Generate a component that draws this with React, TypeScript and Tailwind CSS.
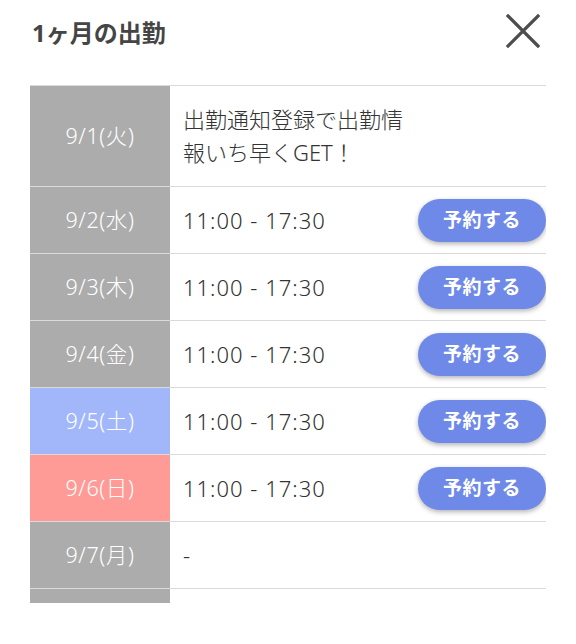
import React from "react";

type Row = { date: string; kind: "gray" | "blue" | "red"; time?: string; note?: string };

const rows: Row[] = [
  { date: "9/1(火)", kind: "gray", note: "出勤通知登録で出勤情報いち早くGET！" },
  { date: "9/2(水)", kind: "gray", time: "11:00 - 17:30" },
  { date: "9/3(木)", kind: "gray", time: "11:00 - 17:30" },
  { date: "9/4(金)", kind: "gray", time: "11:00 - 17:30" },
  { date: "9/5(土)", kind: "blue", time: "11:00 - 17:30" },
  { date: "9/6(日)", kind: "red", time: "11:00 - 17:30" },
  { date: "9/7(月)", kind: "gray" },
  { date: "", kind: "gray" },
];

function DateCell({ row }: { row: Row }) {
  const bg =
    row.kind === "blue" ? "bg-[#a2b7f9]" : row.kind === "red" ? "bg-[#fe9b96]" : "bg-[#acacac]";
  return (
    <div className={`w-[140px] shrink-0 ${bg} flex items-center justify-center text-white text-[21.5px] font-light tracking-[0.6px]`}>
      {row.date}
    </div>
  );
}

export default function App() {
  return (
    <div
      className="w-[576px] h-[644px] bg-white px-[30px] text-[#333]"
      style={{ fontFamily: '"Noto Sans", "Noto Sans CJK JP", sans-serif' }}
    >
      <div className="h-[66px] mb-[19px] flex items-center justify-between">
        <h1 className="text-[24px] font-bold text-[#454545] pl-[2px]">1ヶ月の出勤</h1>
        <svg width="34" height="34" viewBox="0 0 34 34" className="mr-[6px] -mt-[4px]">
          <path d="M2 2 L32 32 M32 2 L2 32" stroke="#4d4d4d" strokeWidth="3.2" strokeLinecap="square" fill="none" />
        </svg>
      </div>
      <div className="h-[518px] overflow-hidden border-t border-[#dadada]">
        {rows.map((row, i) => (
          <div
            key={i}
            className={`flex border-b border-[#dadada] ${i === 0 ? "h-[101px]" : "h-[67px]"}`}
          >
            <DateCell row={row} />
            <div className="flex-1 flex items-center justify-between pl-[13px]">
              {row.note ? (
                <span className="w-[228px] text-[22px] font-light leading-[33px] text-[#333]">{row.note}</span>
              ) : row.time ? (
                <>
                  <span className="text-[22px] font-light tracking-[1px] text-[#333]">{row.time}</span>
                  <button className="w-[128px] h-[43px] rounded-full bg-[#6e89e7] text-white text-[19px] font-semibold tracking-[0.5px] shadow-[0_2px_5px_rgba(0,0,0,0.3)]">
                    予約する
                  </button>
                </>
              ) : row.date ? (
                <span className="text-[22px] font-light text-[#333]">-</span>
              ) : null}
            </div>
          </div>
        ))}
      </div>
    </div>
  );
}
